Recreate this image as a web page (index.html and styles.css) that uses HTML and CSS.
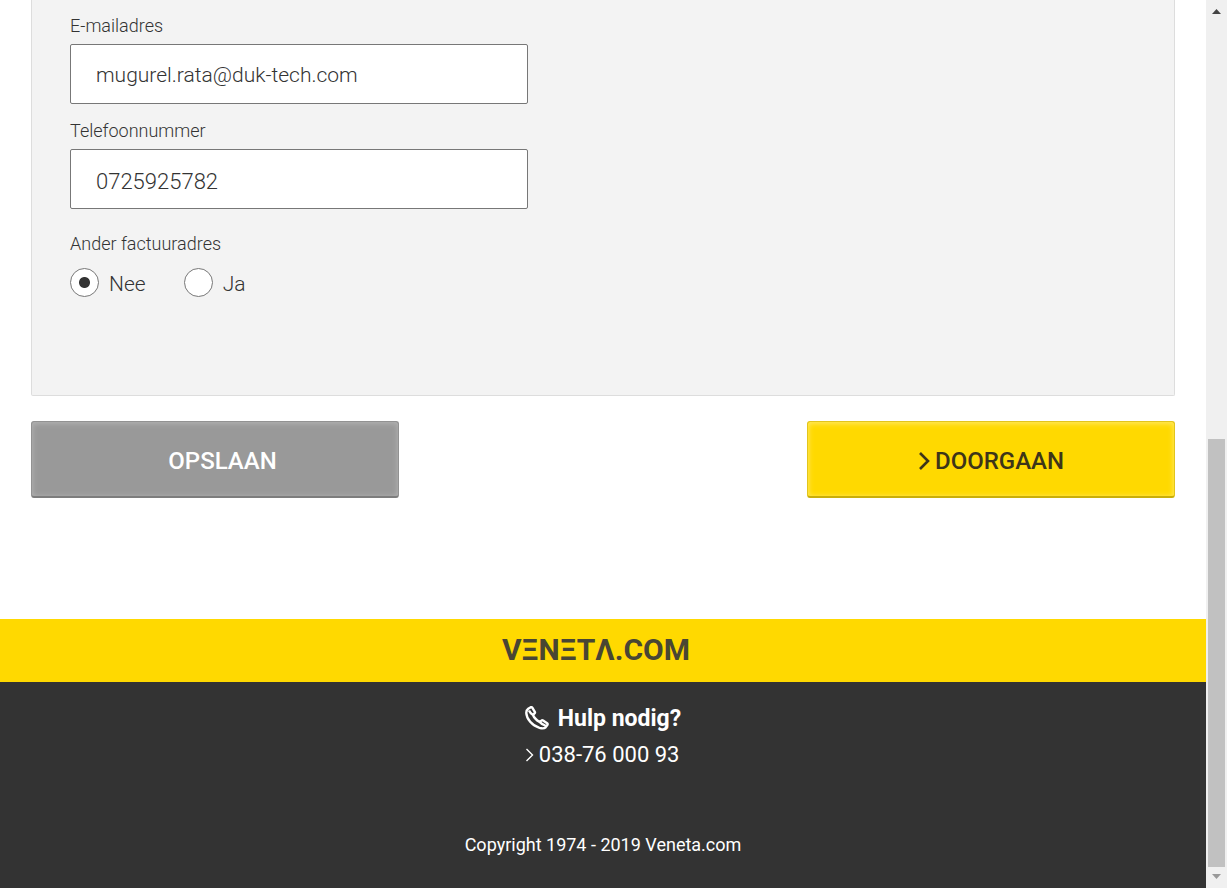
FILE: index.html
```html
<!DOCTYPE html>
<html lang="nl">
<head>
<meta charset="utf-8">
<title>Veneta.com</title>
<link rel="stylesheet" href="styles.css">
</head>
<body>
<div class="page">
  <form class="form">
    <div class="panel">
      <div class="field">
        <label for="email">E-mailadres</label>
        <input class="text" id="email" type="email" value="mugurel.rata@duk-tech.com">
      </div>
      <div class="field">
        <label for="phone">Telefoonnummer</label>
        <input class="text digits" id="phone" type="tel" value="0725925782">
      </div>
      <fieldset class="choice">
        <legend>Ander factuuradres</legend>
        <div class="options">
          <label class="option"><input type="radio" name="billing" checked><span>Nee</span></label>
          <label class="option"><input type="radio" name="billing"><span>Ja</span></label>
        </div>
      </fieldset>
    </div>
    <div class="actions">
      <button class="button save" type="button">OPSLAAN</button>
      <button class="button next" type="button"><svg width="12" height="20" viewBox="0 0 12 20" aria-hidden="true"><path d="M2 2l8 8-8 8" fill="none" stroke="currentColor" stroke-width="2.6"/></svg>DOORGAAN</button>
    </div>
  </form>
  <div class="brand"><span class="logo" aria-label="VENETA.COM">VΞNΞTΛ.COM</span></div>
  <footer class="footer">
    <div class="help">
      <h2><svg width="24" height="24" viewBox="0 0 24 24" aria-hidden="true"><path d="M3.200 2.800L5.800 1.200Q6.700.8 7.300 1.700L9.800 5.800Q10.300 6.700 9.500 7.400L8 9Q9.500 13 14.600 15.900L16.400 14.600Q17.200 14 18.100 14.600L22.100 17.300Q23 18 22.300 19L20.600 21.300Q18.800 23.100 14.500 21.900C7 19.600 1.600 13 1.300 7Q1.200 4.300 3.200 2.800ZM4 4.500Q5.500 7.600 8 9M14.600 15.900Q17.400 19 20.500 19.600" fill="none" stroke="currentColor" stroke-width="2.4" stroke-linejoin="round"/></svg>Hulp nodig?</h2>
      <a href="tel:0387600093"><svg width="10" height="14" viewBox="0 0 10 14" aria-hidden="true"><path d="M1.500 1l6 6-6 6" fill="none" stroke="currentColor" stroke-width="1.4"/></svg>038-76 000 93</a>
    </div>
    <p class="copyright">Copyright 1974 - 2019 Veneta.com</p>
  </footer>
</div>
<div class="scrollbar" aria-hidden="true">
  <svg width="9" height="5" viewBox="0 0 9 5"><path d="M0 5L4.500 0L9 5Z" fill="#444"/></svg>
  <div class="thumb"></div>
  <svg width="9" height="5" viewBox="0 0 9 5"><path d="M0 0h9L4.500 5Z" fill="#999"/></svg>
</div>
</body>
</html>
```

FILE: styles.css
```css
* { box-sizing: border-box; }

body {
  margin: 0;
  display: flex;
  min-height: 100vh;
  background: #fff;
  color: #333;
  font-family: Roboto, "Open Sans", sans-serif;
  font-weight: 300;
}

.page {
  flex: 1;
  display: flex;
  flex-direction: column;
}

.form { padding: 0 31px 121px; }

.panel {
  padding: 14px 38px 98px;
  border: 1px solid #ddd;
  border-top: 0;
  border-radius: 0 0 2px 2px;
  background: #f3f3f3;
}

.field {
  width: 43%;
  margin-bottom: 15px;
}

.field label,
.choice legend {
  display: block;
  padding: 0;
  font-size: 18px;
  line-height: 24px;
}

.text {
  display: block;
  width: 100%;
  height: 60px;
  margin-top: 6px;
  padding: 2px 25px 0;
  border: 1px solid #777;
  border-radius: 2px;
  background: #fff;
  color: #333;
  font: inherit;
  font-size: 21px;
}

.digits {
  padding-top: 4px;
  font-size: 22px;
}

.choice {
  margin: 23px 0 0;
  padding: 0;
  border: 0;
}

.options {
  display: flex;
  gap: 38px;
  padding-top: 12px;
}

.option {
  display: flex;
  align-items: center;
  gap: 10px;
  height: 29px;
  font-size: 21px;
}

.option span {
  padding-top: 4px;
  line-height: 25px;
}

.option input {
  appearance: none;
  width: 29px;
  height: 29px;
  margin: 0;
  border: 1px solid #777;
  border-radius: 50%;
  background: #fff;
}

.option input:checked {
  background: radial-gradient(circle, #333 5px, #fff 6px);
}

.actions {
  display: flex;
  justify-content: space-between;
  margin-top: 25px;
}

.button {
  display: flex;
  align-items: center;
  justify-content: center;
  gap: 5px;
  width: 368px;
  height: 77px;
  padding: 3px 0 0;
  border: 1px solid;
  border-bottom-width: 2px;
  border-radius: 3px;
  font: 500 24px Roboto, "Open Sans", sans-serif;
}

.save {
  padding-left: 15px;
  border-color: #929292 #929292 #7d7d7d;
  background: #999;
  box-shadow: inset 0 1px 5px 1px #b0b0b0;
  color: #fff;
}

.next {
  border-color: #e2c51c #e2c51c #c9ae09;
  background: #ffd900;
  box-shadow: inset 0 1px 5px 1px #ffe75a;
  color: #3d3519;
}

.brand {
  display: flex;
  align-items: center;
  justify-content: center;
  height: 63px;
  padding: 0 14px 3px 0;
  background: #ffd900;
}

.logo {
  color: #494633;
  font: 700 30px Roboto, "Open Sans", sans-serif;
}

.footer {
  flex: 1;
  display: flex;
  flex-direction: column;
  align-items: center;
  padding: 21px 0 30px;
  background: #333;
  color: #fff;
  font-weight: 400;
}

.help h2 {
  display: flex;
  align-items: center;
  gap: 9px;
  margin: 0 0 5px;
  font-size: 23px;
  font-weight: 700;
  line-height: 32px;
}

.help h2 svg { margin-bottom: 2px; }

.help a {
  display: flex;
  align-items: center;
  gap: 4px;
  color: #fff;
  font-size: 22px;
  line-height: 30px;
  text-decoration: none;
}

.copyright {
  margin: 62px 0 0;
  font-size: 18px;
  line-height: 26px;
}

.scrollbar {
  display: flex;
  flex-direction: column;
  align-items: center;
  width: 21px;
  padding: 9px 2px;
  background: #f0f0f0;
}

.thumb {
  width: 100%;
  height: 428px;
  margin: auto 0 7px;
  background: #c1c1c1;
}
```
